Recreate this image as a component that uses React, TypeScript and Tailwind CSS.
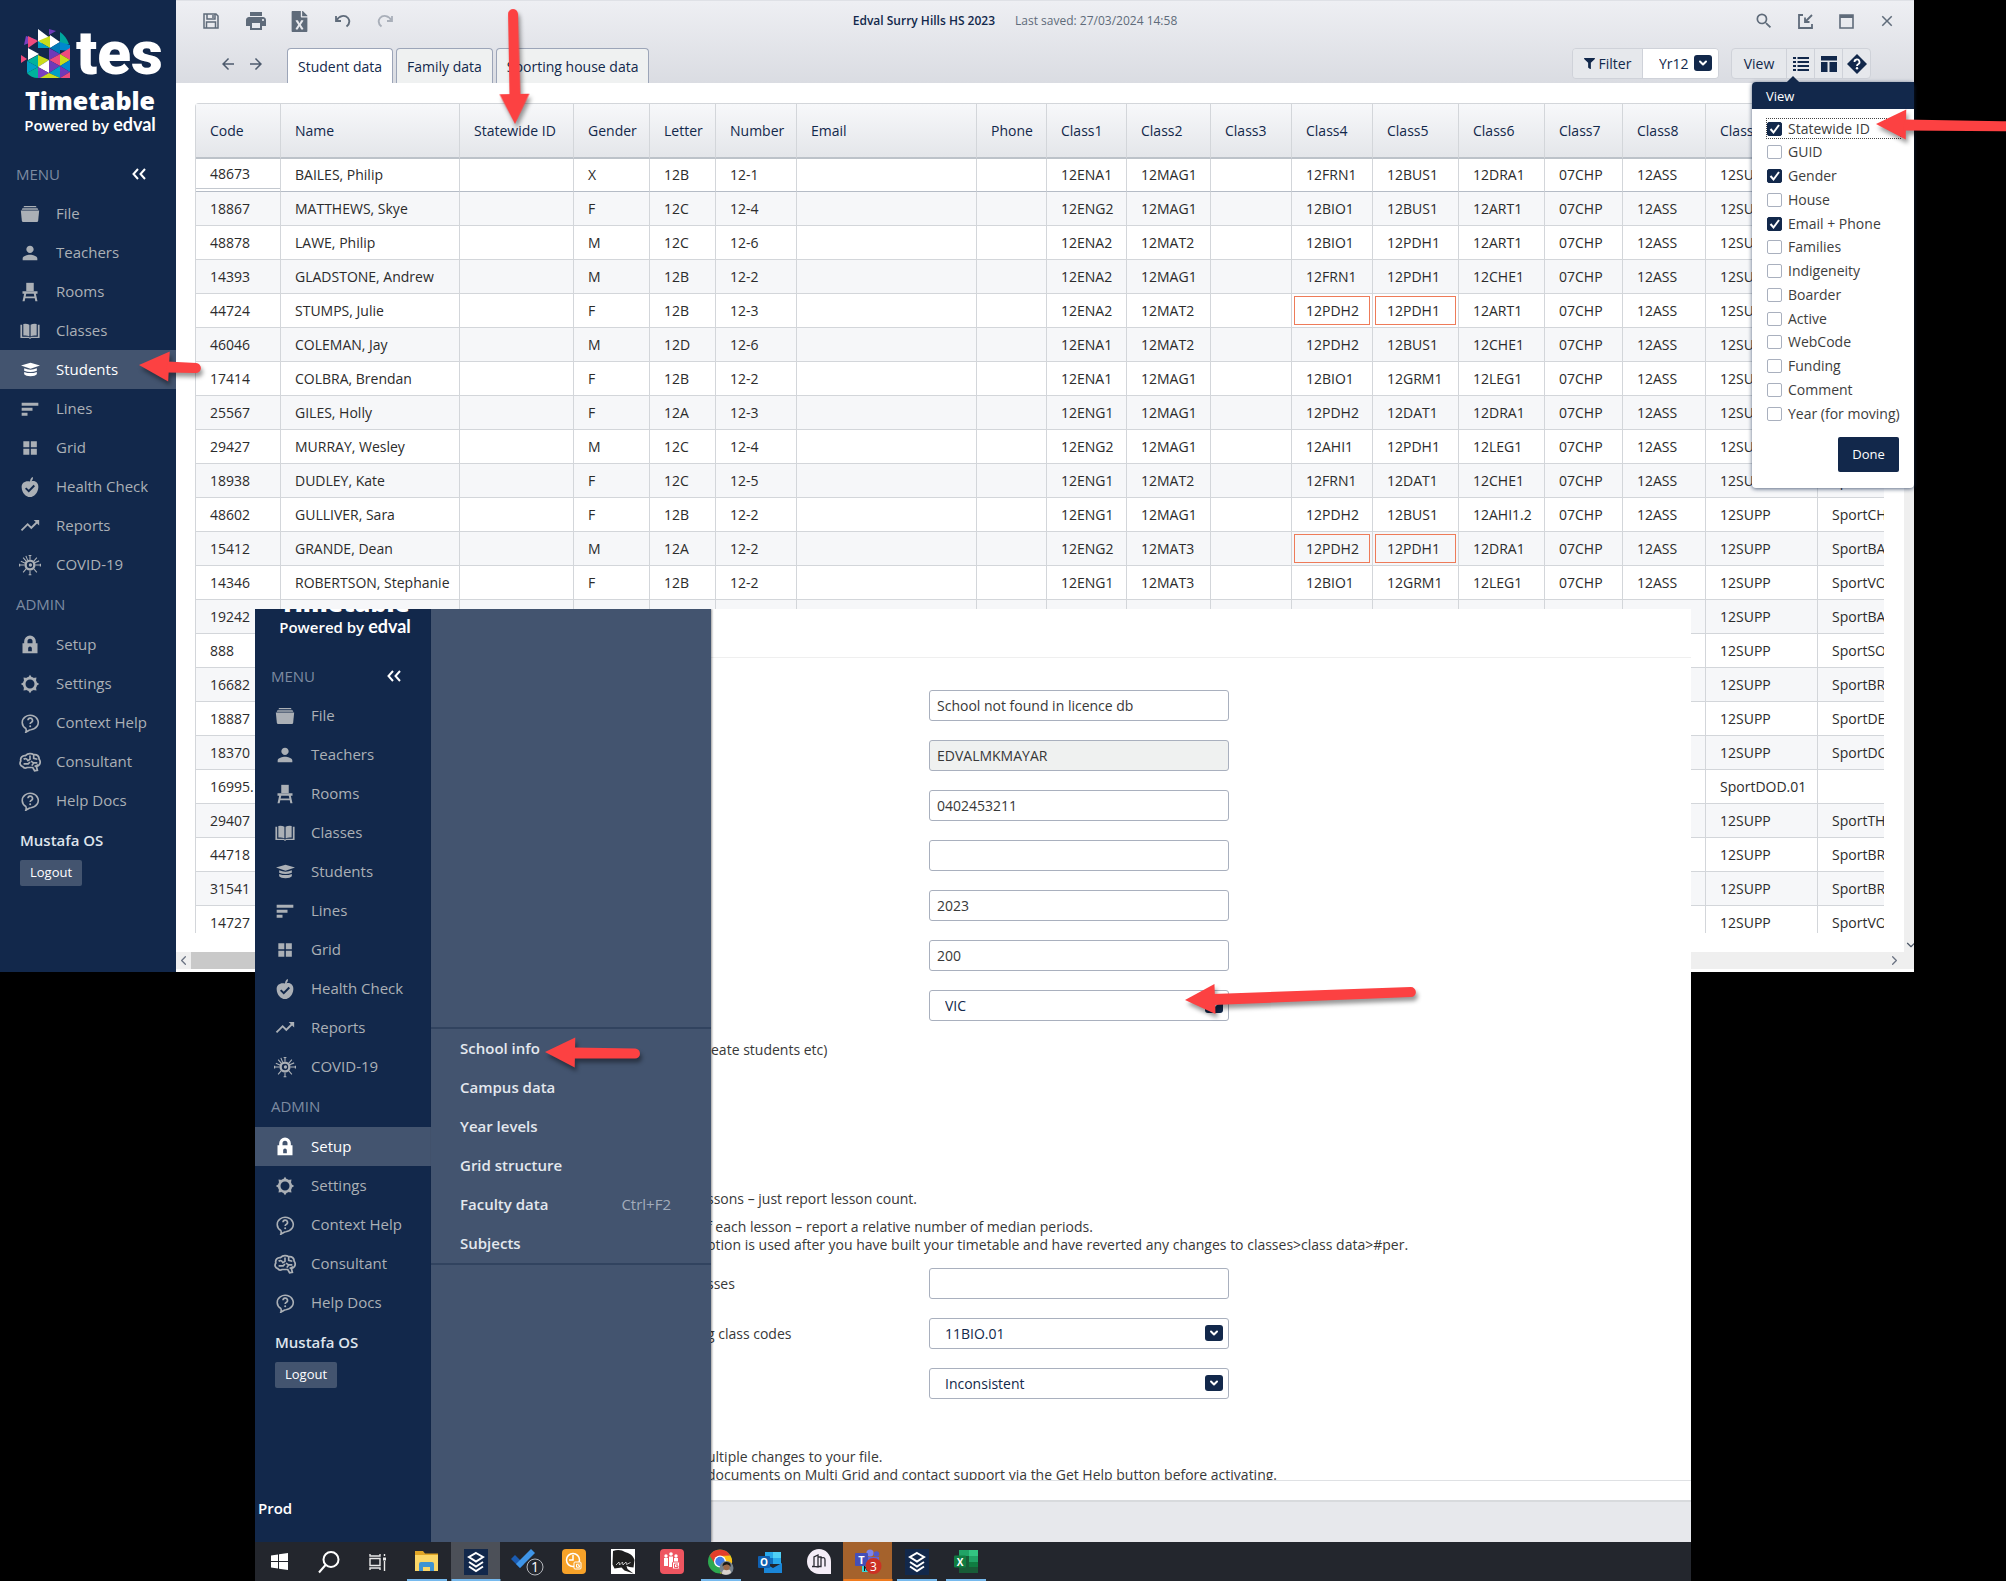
import React, { useState } from 'react';
import { FaFileExcel, FaFilter } from 'react-icons/fa';
import { MdPrint, MdSearch, MdClose, MdPerson, MdArrowBack, MdArrowForward, MdTrendingUp } from 'react-icons/md';
import { ChevronDown, ChevronLeft, ChevronRight } from 'lucide-react';
import clsx from 'clsx';

interface Student {
  code: string;
  name?: string;
  gender?: string;
  letter?: string;
  number?: string;
  classes?: string[];
  class9?: string;
  sport: string;
  clash?: boolean;
}

interface NavEntry {
  label: string;
  icon: React.ReactNode;
}

const students: Student[] = [
  { code: '48673', name: 'BAILES, Philip', gender: 'X', letter: '12B', number: '12-1', classes: ['12ENA1', '12MAG1', '12FRN1', '12BUS1', '12DRA1'], sport: 'SportBAS' },
  { code: '18867', name: 'MATTHEWS, Skye', gender: 'F', letter: '12C', number: '12-4', classes: ['12ENG2', '12MAG1', '12BIO1', '12BUS1', '12ART1'], sport: 'SportSOC' },
  { code: '48878', name: 'LAWE, Philip', gender: 'M', letter: '12C', number: '12-6', classes: ['12ENA2', '12MAT2', '12BIO1', '12PDH1', '12ART1'], sport: 'SportVOL' },
  { code: '14393', name: 'GLADSTONE, Andrew', gender: 'M', letter: '12B', number: '12-2', classes: ['12ENA2', '12MAG1', '12FRN1', '12PDH1', '12CHE1'], sport: 'SportBAS' },
  { code: '44724', name: 'STUMPS, Julie', gender: 'F', letter: '12B', number: '12-3', classes: ['12ENA2', '12MAT2', '12PDH2', '12PDH1', '12ART1'], sport: 'SportTHE', clash: true },
  { code: '46046', name: 'COLEMAN, Jay', gender: 'M', letter: '12D', number: '12-6', classes: ['12ENA1', '12MAT2', '12PDH2', '12BUS1', '12CHE1'], sport: 'SportSOC' },
  { code: '17414', name: 'COLBRA, Brendan', gender: 'F', letter: '12B', number: '12-2', classes: ['12ENA1', '12MAG1', '12BIO1', '12GRM1', '12LEG1'], sport: 'SportVOL' },
  { code: '25567', name: 'GILES, Holly', gender: 'F', letter: '12A', number: '12-3', classes: ['12ENG1', '12MAG1', '12PDH2', '12DAT1', '12DRA1'], sport: 'SportBAS' },
  { code: '29427', name: 'MURRAY, Wesley', gender: 'M', letter: '12C', number: '12-4', classes: ['12ENG2', '12MAG1', '12AHI1', '12PDH1', '12LEG1'], sport: 'SportDOD' },
  { code: '18938', name: 'DUDLEY, Kate', gender: 'F', letter: '12C', number: '12-5', classes: ['12ENG1', '12MAT2', '12FRN1', '12DAT1', '12CHE1'], sport: 'SportCHE' },
  { code: '48602', name: 'GULLIVER, Sara', gender: 'F', letter: '12B', number: '12-2', classes: ['12ENG1', '12MAG1', '12PDH2', '12BUS1', '12AHI1.2'], sport: 'SportCHE' },
  { code: '15412', name: 'GRANDE, Dean', gender: 'M', letter: '12A', number: '12-2', classes: ['12ENG2', '12MAT3', '12PDH2', '12PDH1', '12DRA1'], sport: 'SportBAR', clash: true },
  { code: '14346', name: 'ROBERTSON, Stephanie', gender: 'F', letter: '12B', number: '12-2', classes: ['12ENG1', '12MAT3', '12BIO1', '12GRM1', '12LEG1'], sport: 'SportVOL' },
  { code: '19242', sport: 'SportBAS' },
  { code: '888', sport: 'SportSOC' },
  { code: '16682', sport: 'SportBRA' },
  { code: '18887', sport: 'SportDEB' },
  { code: '18370', sport: 'SportDOD' },
  { code: '16995.1', class9: 'SportDOD.01', sport: '' },
  { code: '29407', sport: 'SportTHE' },
  { code: '44718', sport: 'SportBRA' },
  { code: '31541', sport: 'SportBRA' },
  { code: '14727', sport: 'SportVOL' },
];

const columns = [
  { label: 'Code', width: 'w-[85px]' },
  { label: 'Name', width: 'w-[179px]' },
  { label: 'Statewide ID', width: 'w-[114px]' },
  { label: 'Gender', width: 'w-[76px]' },
  { label: 'Letter', width: 'w-[66px]' },
  { label: 'Number', width: 'w-[81px]' },
  { label: 'Email', width: 'w-[180px]' },
  { label: 'Phone', width: 'w-[70px]' },
  { label: 'Class1', width: 'w-[80px]' },
  { label: 'Class2', width: 'w-[84px]' },
  { label: 'Class3', width: 'w-[81px]' },
  { label: 'Class4', width: 'w-[81px]' },
  { label: 'Class5', width: 'w-[86px]' },
  { label: 'Class6', width: 'w-[86px]' },
  { label: 'Class7', width: 'w-[78px]' },
  { label: 'Class8', width: 'w-[83px]' },
  { label: 'Class9', width: 'w-[112px]' },
  { label: 'Class10', width: 'w-[112px]' },
];

const viewOptions = [
  'Statewide ID', 'GUID', 'Gender', 'House', 'Email + Phone', 'Families', 'Indigeneity',
  'Boarder', 'Active', 'WebCode', 'Funding', 'Comment', 'Year (for moving)',
];

const Svg: React.FC<{ size?: number; children: React.ReactNode }> = ({ size = 20, children }) => (
  <svg width={size} height={size} viewBox="0 0 24 24" fill="currentColor" aria-hidden="true">
    {children}
  </svg>
);

const HelpBubble = () => (
  <Svg>
    <path d="M7 18.6A9.6 8.6 0 1 1 13 20c-1.8 0-3 1.6-6 3 .6-1.600.6-3 0-4.400Z" fill="none" stroke="currentColor" strokeWidth="1.900" />
    <path d="M9.600 8.800a2.700 2.700 0 1 1 3.800 2.500c-.8.4-1.200.9-1.200 2" fill="none" stroke="currentColor" strokeWidth="2" />
    <circle cx="12.200" cy="15.800" r="1.200" />
  </Svg>
);

const menuItems: NavEntry[] = [
  {
    label: 'File',
    icon: <Svg><path d="M5 2.500h14l1 1.500H4Z" /><path d="M3 5h18l1 2H2Z" /><path d="M1 7.800h22L21.800 20q-.2 1.500-1.500 1.500H3.700q-1.300 0-1.500-1.500Z" /></Svg>,
  },
  { label: 'Teachers', icon: <MdPerson size={22} /> },
  {
    label: 'Rooms',
    icon: <Svg><path d="M7.500 1h9v10h-9Z" /><path d="M3 11h18v3h-2l2 9h-2.600l-.7-3.500H6.300L5.600 23H3l2-9H3Zm4.500 3-.7 3.500h10.400l-.7-3.500Z" /></Svg>,
  },
  {
    label: 'Classes',
    icon: <Svg><path d="M4 3.500q4-.8 7.300 1v14Q8 16.800 4 17.500Z" /><path d="M20 3.500q-4-.8-7.300 1v14Q16 16.800 20 17.500Z" /><path d="M2.600 4.500H.5v16h10l1.500 1 1.500-1h10v-16h-2.100v14.300H14l-2 1-2-1H2.600Z" /></Svg>,
  },
  {
    label: 'Students',
    icon: <Svg size={19}><path d="M12 3.500 24 7l-12 4L0 7Z" /><path d="M4 10.500q8 3.500 16 0v3q-8 3-16 0Z" /><path d="M4 15q8 3 16 0v3q-2 2.500-8 2.500T4 18Z" /></Svg>,
  },
  {
    label: 'Lines',
    icon: <Svg><path d="M2 4.500h20V8H2ZM2 10.500h13V14H2ZM2 16.500h7V20H2Z" /></Svg>,
  },
  {
    label: 'Grid',
    icon: <Svg><path d="M4 4h7.200v7.200H4ZM13 4h7.200v7.200H13ZM4 13h7.200v7.200H4ZM13 13h7.200v7.200H13Z" /></Svg>,
  },
  {
    label: 'Health Check',
    icon: <Svg><path d="M12 5.500c.3-3 1.500-5 3.500-5.500.3 2-.6 4-2 5.200 4.500-1.500 9 1.600 8.500 7.300-.5 6.500-5 11.500-10 11.500S2.300 19 2 12.500C1.600 6.800 7 4 12 5.500Zm-4.500 7L6 14l4.500 4.500L18 11l-1.700-1.600-5.800 5.800Z" fillRule="evenodd" /></Svg>,
  },
  { label: 'Reports', icon: <MdTrendingUp size={23} /> },
  {
    label: 'COVID-19',
    icon: (
      <Svg size={22}>
        <circle cx="12" cy="12" r="4.800" fill="none" stroke="currentColor" strokeWidth="2.600" />
        <circle cx="12.500" cy="12" r="1.800" />
        <path d="M12 1v5M12 18v5M1 12h5M18 12h5M4.500 4 8 8M16 16l3.500 4M19.500 4 16 8M8 16l-3.500 4M7.500 2l2 5M22 7.500l-5 2M2 8l5 2" fill="none" stroke="currentColor" strokeWidth="1.200" />
        <path d="M10.500 1h3v1.200h-3ZM10.500 22h3v1.200h-3ZM0 10.500h1.300v3H0ZM22.700 10.500H24v3h-1.300Z" />
      </Svg>
    ),
  },
];

const adminItems: NavEntry[] = [
  {
    label: 'Setup',
    icon: <Svg><path d="M5 10V7.500a7 7 0 0 1 14 0V10h2v12H3V10Zm4 0h6V7.500a3 3 0 0 0-6 0Zm.8 9.500h4.400V16a2.200 2.200 0 0 0-4.400 0Z" fillRule="evenodd" /></Svg>,
  },
  {
    label: 'Settings',
    icon: (
      <Svg>
        <circle cx="12" cy="12" r="7" fill="none" stroke="currentColor" strokeWidth="3.200" />
        <path d="m12 1 2.500 3.500h-5ZM12 23l-2.500-3.500h5ZM1 12l3.500-2.500v5ZM23 12l-3.500 2.500v-5ZM4.200 4.200l4.200.7-3.500 3.500ZM19.800 4.200l-.7 4.200-3.500-3.500ZM4.200 19.800l.7-4.200 3.500 3.500ZM19.800 19.800l-4.200-.7 3.500-3.500Z" />
      </Svg>
    ),
  },
  { label: 'Context Help', icon: <HelpBubble /> },
  {
    label: 'Consultant',
    icon: (
      <Svg size={22}>
        <path d="M4 17c-3-1-3.500-4-2-6C1 7 4 4.500 7 5c3-3 7-2.500 9-1 4-.5 6 2 6 5 2 2.500 1 6-1 7l-2 1 1 4-3 .5-2-3.500H9c-2 1-4 .5-5-1Z" fill="none" stroke="currentColor" strokeWidth="1.900" />
        <path d="M5 9c2-1.500 4-.5 4 1M12 5v4l-3 2M5 14h5l2-2M16 4v4l4 1M13 11l3 2-2 3M16 13h4M17 17l4-2" fill="none" stroke="currentColor" strokeWidth="1.800" />
      </Svg>
    ),
  },
  { label: 'Help Docs', icon: <HelpBubble /> },
];

const setupItems = [
  { label: 'School info' },
  { label: 'Campus data' },
  { label: 'Year levels' },
  { label: 'Grid structure' },
  { label: 'Faculty data', shortcut: 'Ctrl+F2' },
  { label: 'Subjects' },
];

// Points left from its tip, turned by `angle` degrees round that tip
const Arrow: React.FC<{ length: number; angle?: number; square?: boolean; className: string }> = ({ length, angle = 0, square, className }) => (
  <svg
    width={length}
    height={30}
    viewBox={`0 -15 ${length} 30`}
    className={clsx('absolute z-20 overflow-visible pointer-events-none drop-shadow-[2px_4px_2px_rgba(0,0,0,0.4)]', className)}
    aria-hidden="true"
  >
    <g transform={`rotate(${angle})`} fill="#fc4142">
      <path d="M0 0 30-15V15Z" />
      <path d={`M28-5 ${length - 5}-5${square ? `h5v10h-5` : `a5 5 0 0 1 0 10`}L28 6Z`} />
    </g>
  </svg>
);

const Logo = () => (
  <div className="flex flex-col items-center h-[140px] pt-7 text-white">
    <div className="flex h-[50px] w-full pl-5 gap-1">
      <svg width="52" height="52" viewBox="0 0 52 52" aria-hidden="true">
        <path d="M18 1v17l12-8Z" fill="#fff" />
        <path d="M29 1v6l7-4Z" fill="#6f3ab8" />
        <path d="M40 4v13l9-1Q46 8 40 4Z" fill="#00a79d" />
        <path d="M6 8 17 12 4 17Z" fill="#7c3fc0" />
        <path d="M8 8v12l10-7Z" fill="#ef4b7c" />
        <path d="m18 13 12-5v12Z" fill="#c9dc1c" />
        <path d="m30 7 10 7-10 6Z" fill="#fff" />
        <path d="m18 13 12 7H18Z" fill="#00a0c6" />
        <path d="m40 14 10 3v6l-10-1Z" fill="#0088ce" />
        <path d="M8 20v12l11-6Z" fill="#fff" />
        <path d="m29 20 11 6-11 6Z" fill="#6f3ab8" />
        <path d="m40 14-10 6 10 6Z" fill="#0079b8" />
        <path d="M40 26 50 20v12Z" fill="#ef4b7c" />
        <path d="M1 27v8l6-4Z" fill="#ef4b7c" />
        <path d="m18 27 11 5-11 7Z" fill="#c9dc1c" />
        <path d="m40 26-11 6 11 6Z" fill="#ef4b7c" />
        <path d="m40 26 10 6-10 6Z" fill="#c9dc1c" />
        <path d="M18 27 7 33l11 6Z" fill="#00b29c" />
        <path d="M7 33v12l11-6Z" fill="#00a0c6" />
        <path d="M7 45l11-6v11Q11 50 7 45Z" fill="#00b29c" />
        <path d="m29 32-11 7 11 6Z" fill="#fff" />
        <path d="m29 32 11 6-11 7Z" fill="#6f3ab8" />
        <path d="M50 32v12l-10-6Z" fill="#0088ce" />
        <path d="M18 39v11h3l8-5Z" fill="#7c3fc0" />
        <path d="m40 38-11 7 11 5Z" fill="#00a0c6" />
        <path d="m40 38 10 6-10 6Z" fill="#6f3ab8" />
        <path d="m29 45-9 5h20Z" fill="#c9dc1c" />
        <path d="M50 44v6H40Z" fill="#ef4b7c" />
      </svg>
      <span className="font-['Roboto'] font-black text-[62px] leading-[50px]">tes</span>
    </div>
    <span className="pl-1 font-['Open_Sans'] font-extrabold text-[25px] leading-8 mt-[6px]">Timetable</span>
    <span className="flex items-baseline gap-1 pl-1 text-[15px] leading-4 font-semibold">
      Powered by <span className="font-['Lato'] font-bold text-lg leading-4">edval</span>
    </span>
  </div>
);

const NavLink: React.FC<{ item: NavEntry; active: boolean }> = ({ item, active }) => (
  <a
    href="#"
    className={clsx(
      'flex items-center h-[39px] pl-[19px] text-[15px] font-medium',
      active ? 'bg-[#43546f] text-white' : 'text-[#abb0b6]'
    )}
  >
    <span className="flex justify-center w-[22px] mr-[15px]">{item.icon}</span>
    {item.label}
  </a>
);

const Sidebar: React.FC<{ active: string }> = ({ active }) => (
  <nav className="w-44 shrink-0 bg-[#12284b] pb-[86px]" aria-label="Main menu">
    <Logo />
    <div className="flex items-center justify-between h-[54px] pt-[14px] pl-4 pr-[30px] text-[15px] text-[#7d8ba1] font-medium">
      MENU
      <button className="flex text-white" aria-label="Collapse menu">
        <svg width="14" height="12" viewBox="0 0 14 12" fill="none" stroke="currentColor" strokeWidth="2"><path d="M6 1 1.500 6 6 11M13 1 8.500 6l4.500 5" /></svg>
      </button>
    </div>
    {menuItems.map(item => <NavLink key={item.label} item={item} active={item.label === active} />)}
    <div className="flex items-center h-[41px] pl-4 text-[15px] text-[#7d8ba1] font-medium">ADMIN</div>
    {adminItems.map(item => <NavLink key={item.label} item={item} active={item.label === active} />)}
    <div className="px-5 pt-2 text-[15px] leading-6 font-semibold text-[#dfe4ec]">Mustafa OS</div>
    <button className="ml-5 mt-2 h-[26px] px-[10px] rounded-xs bg-[#43546f] text-[13px] text-white">Logout</button>
  </nav>
);

const SelectBox: React.FC<{ label: string; value: string; className: string; badge: string }> = ({ label, value, className, badge }) => (
  <div className="relative">
    <select aria-label={label} defaultValue={value} className={clsx('appearance-none bg-white text-[#12284b] font-medium', className)}>
      <option>{value}</option>
    </select>
    <span className={clsx('absolute grid place-items-center w-[18px] h-4 rounded-[3px] bg-[#12284b] text-white pointer-events-none', badge)}>
      <ChevronDown size={12} strokeWidth={4} />
    </span>
  </div>
);

const Toolbar = () => (
  <div className="h-[83px] bg-linear-to-b from-[#eeeff3] to-[#dadce2] border-t border-[#dfe1e6]">
    <div className="relative flex items-center justify-between h-10 pl-6 pr-[17px] text-[#5f6b7a]">
      <div className="flex items-center">
        <button className="grid place-items-center w-[22px] mr-[22px]" aria-label="Save">
          <svg width="16" height="16" viewBox="0 0 16 16" fill="none" stroke="currentColor" strokeWidth="1.500"><path d="M1 1h12l2 2v12H1Z" /><path d="M4 1v5h8V1M3.500 15V9h9v6M10 2v3" /></svg>
        </button>
        <button className="grid place-items-center w-[22px] mr-[22px]" aria-label="Print"><MdPrint size={24} /></button>
        <button className="grid place-items-center w-[22px] mr-[22px]" aria-label="Export"><FaFileExcel size={21} /></button>
        <button className="grid place-items-center w-[22px] mr-5" aria-label="Undo">
          <svg width="16" height="14" viewBox="0 0 16 14" fill="none" stroke="currentColor" strokeWidth="1.800"><path d="M1 2v5h5M1.500 6.500C4 1.500 10 .5 13 4c2 2.800 1.500 6-1.500 8.500" /></svg>
        </button>
        <button className="grid place-items-center w-[22px] text-[#a9afb9]" aria-label="Redo">
          <svg width="16" height="14" viewBox="0 0 16 14" fill="none" stroke="currentColor" strokeWidth="1.800"><path d="M15 2v5h-5M14.500 6.500C12 1.500 6 .5 3 4c-2 2.800-1.500 6 1.500 8.500" /></svg>
        </button>
      </div>
      <div className="absolute inset-x-0 flex justify-center gap-5 pr-[60px] text-xs pointer-events-none">
        <span className="font-semibold text-[#12284b]">Edval Surry Hills HS 2023</span>
        <span>Last saved: 27/03/2024 14:58</span>
      </div>
      <div className="flex items-center gap-[21px]">
        <button className="grid place-items-center w-5" aria-label="Search"><MdSearch size={20} /></button>
        <button className="grid place-items-center w-5" aria-label="Dock">
          <svg width="15" height="15" viewBox="0 0 15 15" fill="none" stroke="currentColor" strokeWidth="1.800"><path d="M5 1H1v13h13v-4M14 1 7 8M7 3.500V8h4.500" /></svg>
        </button>
        <button className="grid place-items-center w-5" aria-label="Maximise">
          <svg width="15" height="15" viewBox="0 0 15 15" fill="none" stroke="currentColor" strokeWidth="1.600"><path d="M1 1h13v13H1Z" /><path d="M1 2.500h13" strokeWidth="3" /></svg>
        </button>
        <button className="grid place-items-center w-5" aria-label="Close"><MdClose size={18} /></button>
      </div>
    </div>
    <div className="flex h-[42px] pl-10 pr-[43px] text-[15px] font-medium text-[#12284b]">
      <div className="flex items-center gap-1 mr-[19px] text-[#4d5a6d]">
        <button className="grid place-items-center w-6 mt-1" aria-label="Back"><MdArrowBack size={18} /></button>
        <button className="grid place-items-center w-6 mt-1" aria-label="Forward"><MdArrowForward size={18} /></button>
      </div>
      <div className="flex items-end gap-[3px] grow">
        {['Student data', 'Family data', 'Sporting house data'].map((tab, idx) => (
          <button
            key={tab}
            className={clsx(
              'h-[35px] px-[10px] pt-[2px] rounded-t-sm border border-b-0 border-[#9ca5b8] text-sm font-medium',
              idx === 0 ? 'bg-white' : 'bg-[#eff1f1]'
            )}
          >
            {tab}
          </button>
        ))}
      </div>
      <div className="flex h-[31px] mt-[7px] mr-3 border border-[#cfd2d9] rounded-sm overflow-hidden">
        <button className="flex items-center gap-1 w-[70px] justify-center bg-[#e6e8ec] border-r border-[#cfd2d9] text-sm"><FaFilter size={11} />Filter</button>
        <SelectBox label="Year level" value="Yr12" className="w-[75px] h-full pl-4 text-sm" badge="right-[6px] top-[6px]" />
      </div>
      <div className="flex h-[31px] mt-[7px] border border-[#cfd2d9] rounded-sm bg-[#e6e8ec] text-sm">
        <button className="w-[54px]">View</button>
        <button className="grid place-items-center w-7 border-l border-[#cfd2d9]" aria-label="View columns">
          <svg width="16" height="16" viewBox="0 0 16 16" fill="currentColor"><path d="M0 1h3v2H0ZM4.500 1H16v2H4.500ZM0 5h3v2H0ZM4.500 5H16v2H4.500ZM0 9h3v2H0ZM4.500 9H16v2H4.500ZM0 13h3v2H0ZM4.500 13H16v2H4.500Z" /></svg>
        </button>
        <button className="grid place-items-center w-7 border-l border-[#cfd2d9]" aria-label="Layout">
          <svg width="16" height="16" viewBox="0 0 16 16" fill="currentColor"><path d="M0 0h16v4.500H0ZM0 6h6.500v10H0ZM8.500 6H16v10H8.500Z" /></svg>
        </button>
        <button className="grid place-items-center w-7 border-l border-[#cfd2d9]" aria-label="Help">
          <svg width="20" height="20" viewBox="0 0 20 20"><path d="m10 0 10 10-10 10L0 10Z" fill="#12284b" /><path d="M7.500 8a2.500 2.500 0 1 1 3.600 2.200c-.8.400-1.100.8-1.100 1.800" fill="none" stroke="#fff" strokeWidth="1.800" /><circle cx="10" cy="14.300" r="1.200" fill="#fff" /></svg>
        </button>
      </div>
    </div>
  </div>
);

const StudentTable = () => (
  <div className="h-[830px] overflow-hidden ml-[19px] mr-[20px]">
    <table className="w-[1734px] table-fixed border-separate border-spacing-0 border-l border-t border-[#d3d6da] rounded-tl-sm text-sm text-[#2b2b2b] whitespace-nowrap">
      <thead>
        <tr className="h-[55px]">
          {columns.map(col => (
            <th
              key={col.label}
              className={clsx(col.width, 'pl-[14px] text-left font-medium text-[#12284b] border-r border-b-2 border-r-[#d3d6da] border-b-[#bcc2c9] bg-linear-to-b from-[#f7f8fa] to-[#e4e6ea]')}
            >
              {col.label}
            </th>
          ))}
        </tr>
      </thead>
      <tbody>
        {students.map((s, row) => {
          const [c1 = '', c2 = '', c4 = '', c5 = '', c6 = ''] = s.classes || [];
          const cells = [
            s.code, s.name, '', s.gender, s.letter, s.number, '', '',
            c1, c2, '', c4, c5, c6, '07CHP', '12ASS', s.class9 || '12SUPP', s.sport,
          ];
          return (
            <tr key={s.code} className={clsx(row === 0 ? 'h-[33px]' : 'h-[34px]', row % 2 === 1 && 'bg-[#f6f7f9]')}>
              {cells.map((cell, idx) => (
                <td
                  key={idx}
                  className={clsx(
                    'p-0 border-r border-b border-r-[#d3d6da]',
                    row === 0 ? 'border-b-[#b5bcc6]' : 'border-b-[#d3d6da]'
                  )}
                >
                  {s.clash && (idx === 11 || idx === 12) ? (
                    <span className="flex items-center h-[29px] m-[2px] pl-[11px] border border-[#ee7b59]">{cell}</span>
                  ) : (
                    <span className={clsx('flex items-center pl-[14px]', row === 0 && idx === 0 && 'h-[30px] mb-[2px] border-b border-[#c3c8cf]')}>{cell}</span>
                  )}
                </td>
              ))}
            </tr>
          );
        })}
      </tbody>
    </table>
  </div>
);

const ViewPopover = () => {
  const [shown, setShown] = useState<string[]>(['Statewide ID', 'Gender', 'Email + Phone']);

  const toggle = (name: string) => {
    setShown(prev => (prev.includes(name) ? prev.filter(n => n !== name) : [...prev, name]));
  };

  return (
    <div className="absolute z-10 top-[82px] right-0 w-[162px] bg-white rounded-sm shadow-[0_1px_4px_rgba(18,40,75,0.7)] pb-4">
      <span className="absolute -top-1 left-9 w-[10px] h-[10px] rotate-45 bg-[#12284b]" />
      <h2 className="relative h-[27px] pl-[14px] rounded-tl-sm bg-[#12284b] text-[13px] leading-7 font-medium text-white">View</h2>
      <fieldset className="flex flex-col justify-between h-[304px] mt-[10px] ml-[15px]">
        {viewOptions.map((name, idx) => (
          <label
            key={name}
            className={clsx('flex items-center h-[19px] mr-[14px] text-sm font-medium text-[#3d3d3d] whitespace-nowrap', idx === 0 && 'outline-1 outline-dotted outline-[#444]')}
          >
            <span className="relative flex mr-[6px]">
              <input
                type="checkbox"
                checked={shown.includes(name)}
                onChange={() => toggle(name)}
                className="peer appearance-none w-[15px] h-[14px] rounded-xs border border-[#a9b0be] bg-white checked:bg-[#12284b] checked:border-[#12284b]"
              />
              <svg className="absolute inset-0 hidden peer-checked:block pointer-events-none" width="15" height="14" viewBox="0 0 15 14" fill="none" stroke="#fff" strokeWidth="2"><path d="m3.500 7 3 3.500L12 3" /></svg>
            </span>
            {name}
          </label>
        ))}
      </fieldset>
      <button className="block ml-auto mr-[15px] mt-[14px] w-[61px] h-[35px] rounded-xs bg-[#12284b] text-[13px] font-medium text-white">Done</button>
    </div>
  );
};

const StudentWindow = () => (
  <section className="relative col-start-1 row-start-1 self-start flex mr-[92px] bg-white">
    <Sidebar active="Students" />
    <div className="grow min-w-0 flex flex-col">
      <Toolbar />
      <div className="flex grow pt-5">
        <div className="grow min-w-0">
          <StudentTable />
        </div>
        <div className="flex items-end w-[10px] -mt-5 bg-[#efefef] overflow-hidden"><ChevronDown size={14} className="shrink-0 text-gray-600" /></div>
      </div>
      <div className="flex items-center h-[17px] mb-[3px] bg-[#efefef] text-gray-500">
        <ChevronLeft size={15} />
        <div className="h-full w-3/5 bg-[#c9c9c9]" />
        <ChevronRight size={15} className="ml-auto mr-3" />
      </div>
    </div>
    <ViewPopover />
    <Arrow length={115} angle={-91} className="left-[515px] top-[109px]" />
    <Arrow length={62} angle={3} className="left-[139px] top-[350px]" />
    <Arrow length={131} angle={1} square className="left-[1876px] top-[109px]" />
  </section>
);

const TextField: React.FC<{ label?: string; name: string; value?: string; disabled?: boolean; select?: boolean }> = ({ label, name, value = '', disabled, select }) => (
  <div className="grid grid-cols-[218px_300px] items-center">
    <label htmlFor={select ? undefined : name} className="-ml-1">{label}</label>
    {select ? (
      <SelectBox label={name} value={value} className="w-full h-[31px] pl-[15px] border border-[#a9b0be] rounded-[3px]" badge="right-[6px] top-[7px]" />
    ) : (
      <input
        id={name}
        aria-label={name}
        defaultValue={value}
        disabled={disabled}
        className={clsx('w-full h-[31px] pl-[7px] border border-[#a9b0be] rounded-[3px]', disabled ? 'bg-[#eff1f0]' : 'bg-white')}
      />
    )}
  </div>
);

const Layers = () => (
  <svg width="24" height="26" viewBox="0 0 24 26" fill="none" stroke="#fff" strokeWidth="2">
    <path d="M0 0h24v26H0Z" fill="#12284b" stroke="none" />
    <path d="m12 4 7 4-7 4.500L5 8ZM5 13l7 4.500 7-4.500M5 17.500l7 4.500 7-4.500" />
  </svg>
);

const taskbarApps: { name: string; cell?: string; line?: string; icon: React.ReactNode }[] = [
  { name: 'Start', icon: <svg width="17" height="17" viewBox="0 0 17 17" fill="#fff"><path d="m0 2.500 7-1V8H0ZM8 1.300 17 0v8H8ZM0 9h7v6.500l-7-1ZM8 9h9v8l-9-1.300Z" /></svg> },
  { name: 'Search', icon: <svg width="24" height="24" viewBox="0 0 24 24" fill="none" stroke="#fff" strokeWidth="2"><circle cx="14" cy="9.500" r="7.500" /><path d="M8.500 15 2 22.500" /></svg> },
  { name: 'Task view', icon: <svg width="18" height="18" viewBox="0 0 18 18" fill="none" stroke="#e8e8e8" strokeWidth="1.400"><path d="M1 1v2h10V1M1 5.500h10v7H1ZM1 17v-2h10v2M15.500 1v2M15.500 8v10" /><path d="M14 4.500h3v3h-3Z" fill="#e8e8e8" stroke="none" /></svg> },
  {
    name: 'File Explorer', line: 'w-10 bg-[#76b9ed]',
    icon: <svg width="23" height="21" viewBox="0 0 23 21"><path d="M0 0h8l2 2.500h13V20H0Z" fill="#e0a526" /><path d="M0 4h23v16H0Z" fill="#fbd667" /><path d="M4 20v-7q0-2 2-2h11q2 0 2 2v7h-4v-4H8v4Z" fill="#3f93d2" /></svg>,
  },
  { name: 'Edval', cell: 'bg-[#4c5058]', line: 'w-full bg-[#76b9ed]', icon: <Layers /> },
  {
    name: 'To Do',
    icon: (
      <svg width="34" height="28" viewBox="0 0 34 28" className="ml-1">
        <path d="m1 11 4-4 9 9-4 4Z" fill="#1b5cb3" /><path d="M21 1l4 4-15 15-4-4Z" fill="#3f95e8" />
        <circle cx="25" cy="19" r="8" fill="#24272e" stroke="#b5b8bd" /><text x="25" y="24" textAnchor="middle" fontSize="14" fill="#fff" fontFamily="Open Sans">1</text>
      </svg>
    ),
  },
  {
    name: 'Roster',
    icon: (
      <svg width="24" height="25" viewBox="0 0 24 25" fill="none" stroke="#fff">
        <rect width="24" height="25" rx="4" fill="#f7a229" stroke="none" /><circle cx="11" cy="11" r="6.500" strokeWidth="1.500" /><path d="M11 6v5H7" strokeWidth="1.500" />
        <rect x="12" y="13" width="7" height="7" rx="1" fill="#f7a229" /><path d="M17.500 15.200h-3v3h3v-1.500h-1.500" />
      </svg>
    ),
  },
  {
    name: 'Notes',
    icon: <svg width="24" height="25" viewBox="0 0 24 25"><path d="M0 0h24v25H0Z" fill="#fff" /><path d="M2 2C7 0 11 1 14 3c4 1 8 3 9.500 8l-1 7.500-4-.5-3-1 1 3 6 4.500-9-3-3-3-7 1-2-4Z" fill="#1e1e1e" /><path d="m5 16 3-3 .5 3 3-3 .5 3 3-3 .5 2.500 4-2" fill="none" stroke="#ddd" strokeWidth="0.800" /></svg>,
  },
  {
    name: 'People',
    icon: (
      <svg width="24" height="25" viewBox="0 0 24 25" fill="#fff">
        <rect width="24" height="25" rx="4" fill="#ee5560" /><circle cx="6" cy="7" r="1.700" /><circle cx="11" cy="5" r="1.800" /><circle cx="16" cy="7" r="1.700" />
        <path d="M4 9h4v8H4ZM9 7.500h4V18H9ZM14 9h4v4h-4Z" /><rect x="12.500" y="13" width="7" height="7" rx="1" stroke="#ee5560" /><path d="M18 15h-3.500v3.500H18v-1.700h-2" fill="none" stroke="#ee5560" />
      </svg>
    ),
  },
  {
    name: 'Chrome', line: 'w-10 bg-[#76b9ed]',
    icon: (
      <svg width="26" height="26" viewBox="0 0 26 26">
        <circle cx="12" cy="12.500" r="12" fill="#2da94f" /><path d="M1.600 6.500A12 12 0 0 1 22.400 6.500L12 8Z" fill="#e33e2b" /><path d="M1.600 6.500 7 15 12 8 22.400 6.500H12Z" fill="#e33e2b" />
        <path d="M22.400 6.500A12 12 0 0 1 12 24.500L17.500 14.500 12 7Z" fill="#fbc116" /><circle cx="12" cy="12.500" r="6" fill="#fff" /><circle cx="12" cy="12.500" r="4.700" fill="#3f7de8" />
        <circle cx="18.500" cy="19" r="7" fill="#77828c" /><path d="M14 25q0-5 4.500-5t4.500 4Q19 27 14 25Z" fill="#d8d2cc" /><circle cx="18.500" cy="18" r="3.200" fill="#9c6848" /><path d="M14.500 17.500q0-5 4.500-4.500t3.500 5q-1-3-4-2.500t-4 2Z" fill="#1b1714" />
      </svg>
    ),
  },
  {
    name: 'Outlook',
    icon: (
      <svg width="24" height="22" viewBox="0 0 24 22">
        <path d="M7 1h16v12H7Z" fill="#28a8ea" /><path d="M15 1h8v6h-8Z" fill="#50d0f5" /><path d="M7 7h8v6H7Z" fill="#0f6cbd" /><path d="M6 12l9 5 9-5v10H6Z" fill="#1a86d8" />
        <rect y="5" width="12" height="12" rx="1" fill="#0f5fb0" /><text x="6" y="14.500" textAnchor="middle" fontSize="10" fontWeight="700" fill="#fff" fontFamily="Open Sans">O</text>
      </svg>
    ),
  },
  {
    name: 'Rooms',
    icon: <svg width="24" height="25" viewBox="0 0 24 25" fill="none" stroke="#2b2b33" strokeWidth="1.300"><path d="M12 0a12 12.500 0 0 1 12 12.500V25H12A12 12.500 0 0 1 12 0Z" fill="#f4edf7" stroke="none" /><path d="M7 17.500V8l4-2v12ZM11 8h3v9.500h-3M14 9q4-1.500 4 2v6.500M5 17.500h2" /></svg>,
  },
  {
    name: 'Teams', cell: 'bg-[#a5622c]', line: 'w-full bg-[#f07b1e]',
    icon: (
      <svg width="28" height="27" viewBox="0 0 28 27">
        <circle cx="16" cy="5" r="3.600" fill="#7b83eb" /><circle cx="22.500" cy="6" r="2.700" fill="#5059c9" /><path d="M12 9h13v7q0 6-6 6t-7-5Z" fill="#5f67d3" /><path d="M8 16h8v8H8Z" fill="#38d6d6" /><path d="M10.500 23v-5l3 5v-5" fill="none" stroke="#111" />
        <rect x="1" y="5" width="13" height="13" rx="1" fill="#444fb8" /><text x="7.500" y="15.500" textAnchor="middle" fontSize="11" fontWeight="700" fill="#fff" fontFamily="Open Sans">T</text>
        <circle cx="19.500" cy="18" r="8" fill="#cc3124" /><text x="19.500" y="22.500" textAnchor="middle" fontSize="12" fill="#fff" fontFamily="Open Sans">3</text>
      </svg>
    ),
  },
  { name: 'Edval Timetable', line: 'w-10 bg-[#76b9ed]', icon: <Layers /> },
  {
    name: 'Excel', line: 'w-10 bg-[#76b9ed]',
    icon: (
      <svg width="24" height="23" viewBox="0 0 24 23">
        <path d="M5 0h19v23H5Z" fill="#185c37" /><path d="M5 0h10v6H5Z" fill="#21a366" /><path d="M15 0h9v6h-9Z" fill="#33c481" /><path d="M15 6h9v6h-9Z" fill="#21a366" /><path d="M15 12h9v5h-9Z" fill="#107c41" />
        <rect y="5.500" width="12" height="12" rx="1" fill="#107c41" /><text x="6" y="15.500" textAnchor="middle" fontSize="10" fontWeight="700" fill="#fff" fontFamily="Open Sans">X</text>
      </svg>
    ),
  },
];

const Taskbar = () => (
  <div className="relative z-10 flex h-[39px] bg-[#23262d]">
    {taskbarApps.map(app => (
      <button key={app.name} aria-label={app.name} className={clsx('relative grid place-items-center w-[49px] h-full', app.cell)}>
        {app.icon}
        {app.line && <span className={clsx('absolute bottom-0 left-1/2 -translate-x-1/2 h-[2px]', app.line)} />}
      </button>
    ))}
  </div>
);

const SetupWindow = () => (
  <section className="relative z-20 col-start-1 row-start-1 ml-[255px] mr-[315px] mt-[609px] flex flex-col bg-white">
    <div className="flex h-[933px] overflow-hidden">
      <div className="relative w-44 shrink-0 flex flex-col bg-[#12284b]">
        <div className="-mt-[107px]"><Sidebar active="Setup" /></div>
        <span className="mt-auto mb-[22px] pl-[3px] text-[15px] leading-6 font-semibold text-white">Prod</span>
      </div>
      <div className="w-[280px] shrink-0 bg-[#43546f] pt-[418px] shadow-[1px_0_2px_rgba(0,0,0,0.4)] z-10">
        <ul className="border-y-2 border-[#31435f] text-[15px] font-semibold text-[#e4e8ee]">
          {setupItems.map(item => (
            <li key={item.label}>
              <a href="#" className="flex items-center justify-between h-[39px] pl-[29px] pr-10">
                {item.label}
                {item.shortcut && <span className="font-normal text-[#a2acbb]">{item.shortcut}</span>}
              </a>
            </li>
          ))}
        </ul>
      </div>
      <div className="grow min-w-0 flex flex-col">
        <div className="h-[49px] shrink-0 border-b border-[#efefef]" />
        <div className="h-[822px] shrink-0 overflow-hidden pt-8 text-sm leading-[18px] font-medium text-[#383838] whitespace-nowrap">
          <div className="flex flex-col gap-[19px]">
            <TextField name="School name" value="School not found in licence db" />
            <TextField name="Licence key" value="EDVALMKMAYAR" disabled />
            <TextField name="Phone" value="0402453211" />
            <TextField name="Fax" />
            <TextField name="Year" value="2023" />
            <TextField name="Periods" value="200" />
            <TextField name="State" value="VIC" select />
          </div>
          <p className="mt-5">eate students etc)</p>
          <p className="-ml-1 mt-[131px]">ssons – just report lesson count.</p>
          <p className="-ml-1 mt-[10px]">f each lesson – report a relative number of median periods.</p>
          <p className="-ml-1">ption is used after you have built your timetable and have reverted any changes to classes&gt;class data&gt;#per.</p>
          <div className="flex flex-col gap-[19px] mt-[14px]">
            <TextField label="sses" name="Excluded classes" />
            <TextField label="g class codes" name="Class code format" value="11BIO.01" select />
            <TextField name="Roll class naming" value="Inconsistent" select />
          </div>
          <p className="-ml-1 mt-[49px]">ultiple changes to your file.</p>
          <p className="-ml-1">documents on Multi Grid and contact support via the Get Help button before activating.</p>
        </div>
        <div className="h-5 shrink-0 border-t border-[#dfe1e4]" />
        <div className="grow bg-[#e7e8ec] border-t-2 border-[#d8dadd]" />
      </div>
    </div>
    <Taskbar />
    <Arrow length={231} angle={-2} className="left-[930px] top-[376px]" />
    <Arrow length={95} angle={1} className="left-[290px] top-[428px]" />
  </section>
);

export default function App() {
  return (
    <main className="grid grid-cols-1 min-h-screen overflow-hidden bg-black font-['Open_Sans','Noto_Sans',sans-serif]">
      <StudentWindow />
      <SetupWindow />
    </main>
  );
}
